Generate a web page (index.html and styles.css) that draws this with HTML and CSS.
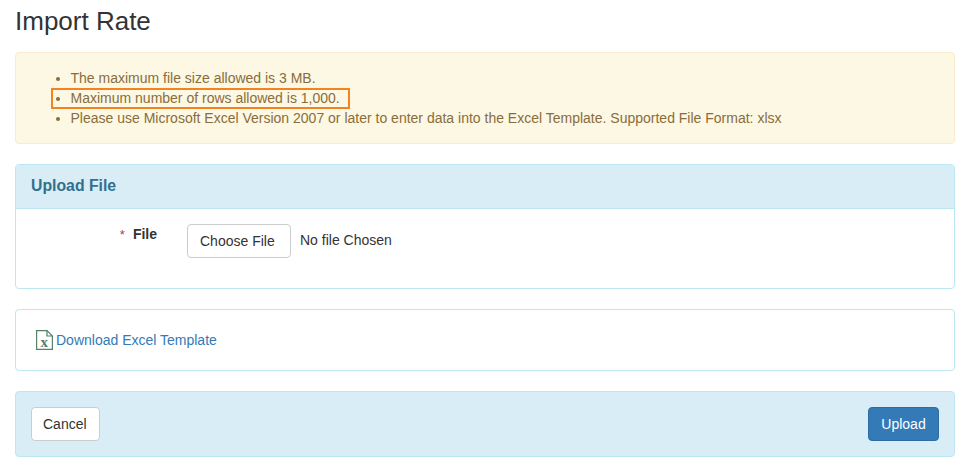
FILE: index.html
```html
<!DOCTYPE html>
<html lang="en">
<head>
<meta charset="utf-8">
<title>Import Rate</title>
<link rel="stylesheet" href="styles.css">
</head>
<body>
<h1 class="title">Import Rate</h1>
<div class="alert">
  <ul class="notes">
    <li>The maximum file size allowed is 3 MB.</li>
    <li><span class="mark">Maximum number of rows allowed is 1,000.</span></li>
    <li>Please use Microsoft Excel Version 2007 or later to enter data into the Excel Template. Supported File Format: xlsx</li>
  </ul>
</div>
<section class="panel">
  <h2 class="panel-head">Upload File</h2>
  <div class="panel-body">
    <div class="field-label"><span class="req">*</span><b>File</b></div>
    <button class="btn file-btn" type="button">Choose File</button>
    <span class="file-name">No file Chosen</span>
  </div>
</section>
<section class="panel download">
  <svg class="xls" width="17" height="20" viewBox="0 0 17 20" aria-hidden="true">
    <path d="M.6.6H11L16.4 6V19.4H.6Z" fill="#fff" stroke="#55806a" stroke-width="1.2"/>
    <path d="M11 .6V6H16.4" fill="none" stroke="#55806a" stroke-width="1.2"/>
    <text x="4.5" y="17" class="xls-x">x</text>
  </svg>
  <a class="link" href="#">Download Excel Template</a>
</section>
<section class="panel actions">
  <button class="btn cancel" type="button">Cancel</button>
  <button class="btn primary" type="button">Upload</button>
</section>
</body>
</html>
```
FILE: styles.css
```css
* { box-sizing: border-box; }
html, body { margin: 0; padding: 0; }
body {
  background: #fff;
  color: #333;
  font-family: "Liberation Sans", Arial, sans-serif;
  font-size: 14px;
  line-height: 20px;
  padding: 0 13px 0 15px;
  overflow: hidden;
  height: 465px;
}
.title {
  margin: 0;
  height: 52px;
  padding-top: 5px;
  font-size: 26px;
  line-height: 33px;
  font-weight: 400;
}
.alert {
  height: 92px;
  background: #fcf8e3;
  border: 1px solid #faebcc;
  border-radius: 4px;
  color: #8a6d3b;
  padding: 15px;
  margin-bottom: 20px;
}
.notes { margin: 0; padding: 0 0 0 39.5px; }
.notes li { height: 20px; }
.mark { position: relative; }
.mark::after {
  content: "";
  position: absolute;
  left: -19.5px;
  right: -10px;
  top: -2px;
  bottom: -3px;
  border: 2px solid #f58220;
}
.panel {
  border: 1px solid #bce8f1;
  border-radius: 4px;
  margin-bottom: 20px;
  background: #fff;
}
.panel-head {
  margin: 0;
  height: 44px;
  padding: 11px 15px 0;
  background: #d9edf7;
  border-bottom: 1px solid #bce8f1;
  border-radius: 3px 3px 0 0;
  color: #31708f;
  font-size: 15.8px;
  line-height: 20px;
  font-weight: 700;
}
.panel-body {
  height: 79px;
  display: flex;
  align-items: flex-start;
  padding-top: 15px;
}
.field-label {
  width: 141px;
  margin-right: 30px;
  text-align: right;
  font-size: 14px;
}
.req { color: #a94442; margin-right: 8px; font-size: 13px; }
.btn {
  font: inherit;
  height: 34px;
  padding: 0 12px;
  color: #333;
  background: #fff;
  border: 1px solid #ccc;
  border-radius: 4px;
}
.file-btn { width: 104px; text-align: left; }
.file-name { margin-left: 9px; padding-top: 6px; }
.download {
  height: 62px;
  display: flex;
  align-items: center;
  padding: 0 19px 1px 20px;
}
.xls { flex: none; margin-right: 3px; }
.xls-x { font-family: "Liberation Serif", serif; font-size: 15px; font-weight: 700; fill: #55806a; }
.link { color: #337ab7; text-decoration: none; }
.actions {
  height: 66px;
  margin-bottom: 0;
  background: #d9edf7;
  display: flex;
  align-items: center;
  justify-content: space-between;
  padding: 0 15px;
}
.cancel { width: 69px; padding: 0 0 0 11px; text-align: left; }
.primary { width: 71px; padding: 0; background: #337ab7; border-color: #2e6da4; color: #fff; }
```
